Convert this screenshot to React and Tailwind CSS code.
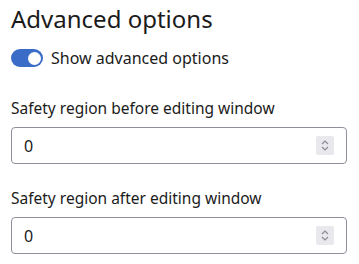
import React, { useState } from 'react';

function NumberField({ label, value }) {
  return (
    <div className="flex flex-col">
      <label className="text-[15.5px] leading-[22px] text-[#1b1b1b]">{label}</label>
      <div className="mt-[8px] h-[37px] flex items-center border border-[#8f8f9d] rounded-[4px] bg-white pl-[12px] pr-[12px]">
        <input
          type="text"
          defaultValue={value}
          className="flex-1 min-w-0 outline-none bg-transparent text-[16px] text-[#1b1b1b]"
        />
        <div className="w-[18px] h-[19px] bg-[#e9e9ed] rounded-[2px] flex items-center justify-center">
          <svg width="10" height="13" viewBox="0 0 10 13" fill="none" stroke="#8a8a94" strokeWidth="1.2">
            <path d="M2 5 L5 2 L8 5" />
            <path d="M2 8 L5 11 L8 8" />
          </svg>
        </div>
      </div>
    </div>
  );
}

export default function App() {
  const [on, setOn] = useState(true);
  return (
    <div
      className="w-[359px] h-[264px] bg-white pl-[11px] pr-[12px] pt-[3px] overflow-hidden"
      style={{ fontFamily: '"Noto Sans", sans-serif' }}
    >
      <h2 className="text-[24px] leading-[32px] text-[#1b1b1b]">Advanced options</h2>
      <div className="mt-[12px] flex items-center gap-[8px]">
        <button
          onClick={() => setOn(!on)}
          className={`w-[32px] h-[18px] rounded-full flex items-center px-[2px] ${on ? 'bg-[#3a6cc8] justify-end' : 'bg-[#8f8f9d] justify-start'}`}
        >
          <span className="w-[13px] h-[13px] rounded-full bg-white" />
        </button>
        <span className="text-[16px] leading-[22px] text-[#1b1b1b]">Show advanced options</span>
      </div>
      <div className="mt-[28px] flex flex-col gap-[23px]">
        <NumberField label="Safety region before editing window" value="0" />
        <NumberField label="Safety region after editing window" value="0" />
      </div>
    </div>
  );
}
